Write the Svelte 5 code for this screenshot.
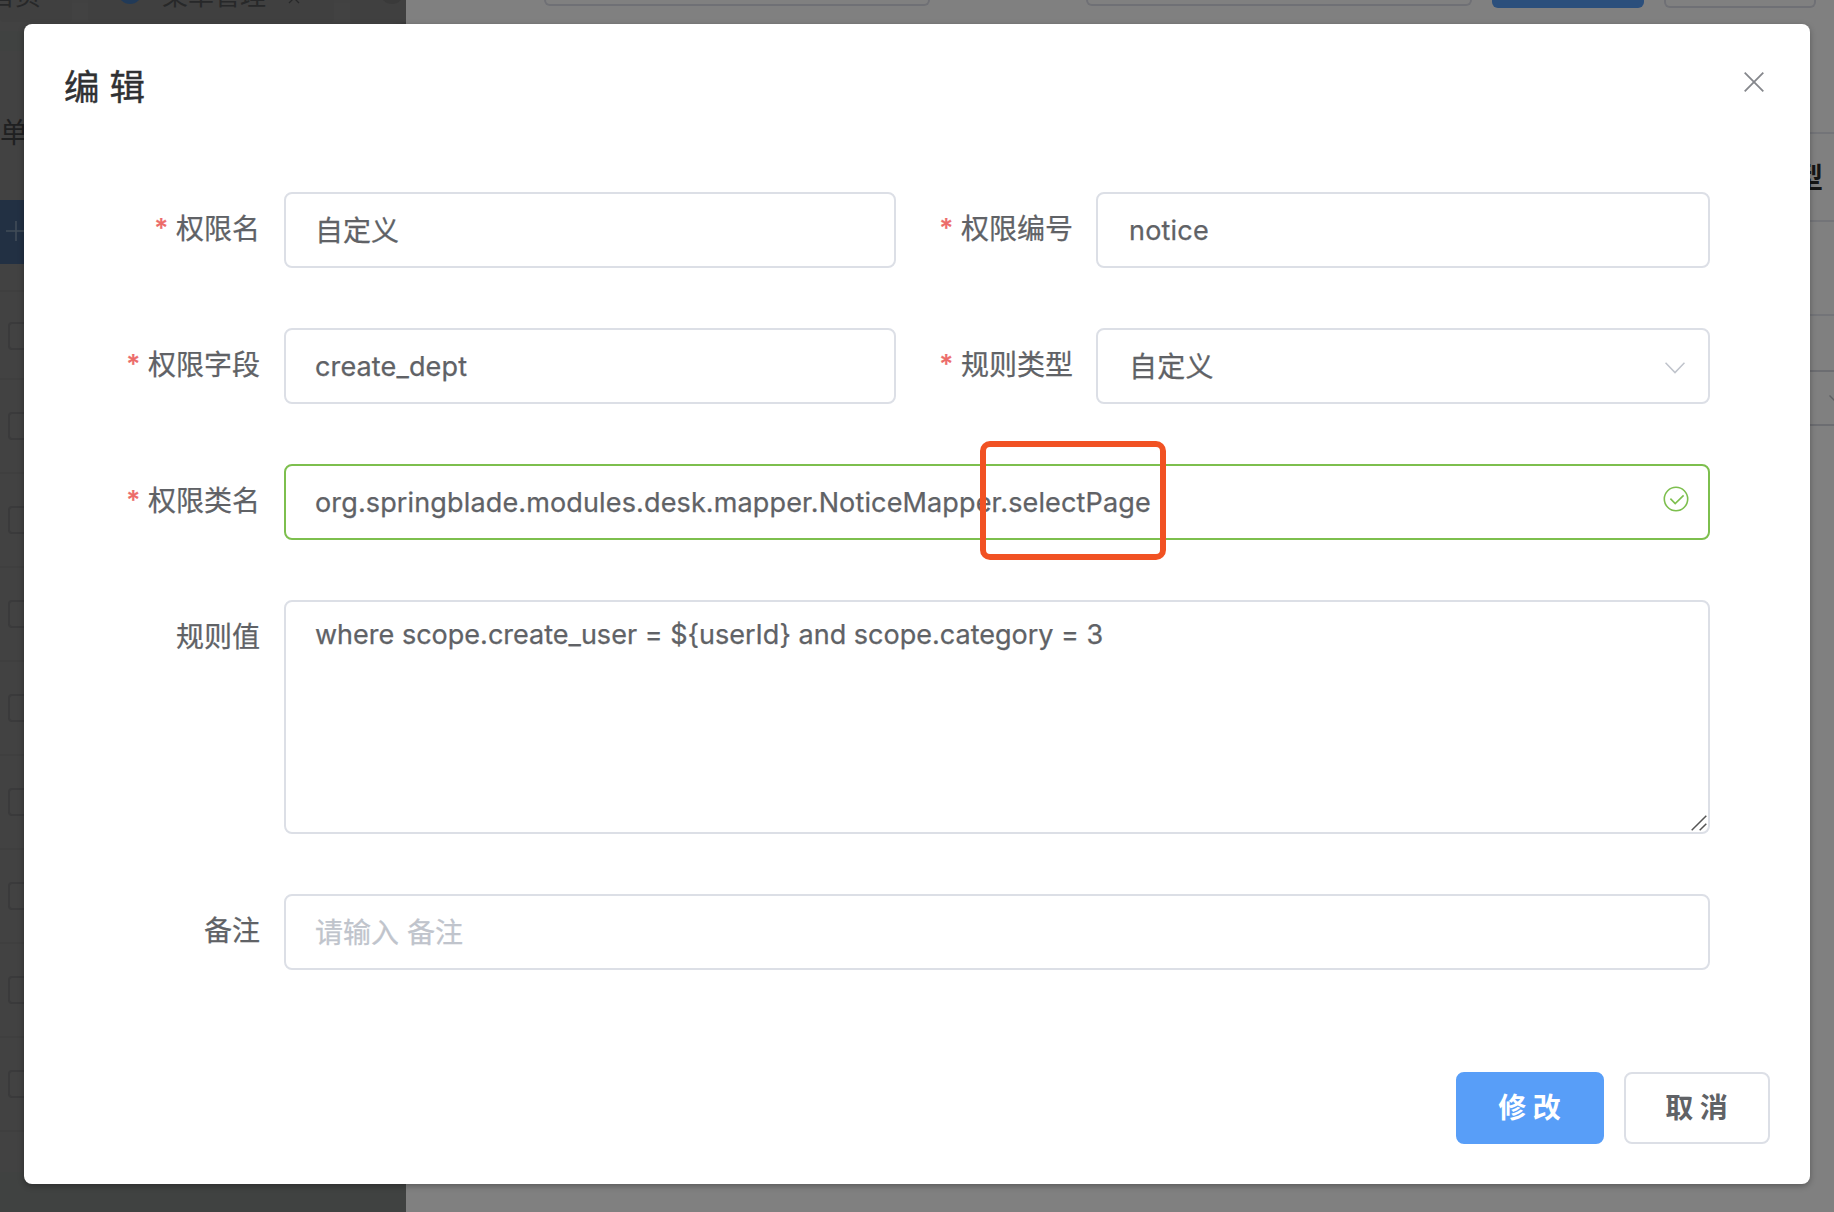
<script lang="ts">
  type Field = { label: string; value: string; required?: boolean; kind?: string; placeholder?: boolean };

  const rows: Field[][] = [
    [
      { label: '权限名', value: '自定义', required: true, kind: 'cjk' },
      { label: '权限编号', value: 'notice', required: true },
    ],
    [
      { label: '权限字段', value: 'create_dept', required: true },
      { label: '规则类型', value: '自定义', required: true, kind: 'select' },
    ],
    [{ label: '权限类名', value: 'org.springblade.modules.desk.mapper.NoticeMapper.selectPage', required: true, kind: 'valid' }],
    [{ label: '规则值', value: 'where scope.create_user = ${userId} and scope.category = 3', kind: 'area' }],
    [{ label: '备注', value: '请输入 备注', placeholder: true, kind: 'cjk' }],
  ];
  const tableRows = [1, 2, 3, 4, 5, 6, 7, 8];
</script>

<div class="screen">
  <section class="list">
    <nav class="tabs">
      <div class="tab first"><span>首页</span></div>
      <div class="tab second">
        <i class="dot"></i><span>菜单管理</span>
        <svg class="tabx" viewBox="0 0 12 12"><path d="M1 1l10 10M11 1L1 11" /></svg>
      </div>
      <div class="tab third"><i class="dot grey"></i></div>
    </nav>
    <div class="band"></div>
    <div class="search">单</div>
    <div class="add"><svg viewBox="0 0 20 20"><path d="M10 0v20M0 10h20" /></svg></div>
    <div class="trow head"><i class="check"></i></div>
    {#each tableRows as r (r)}
      <div class="trow"><i class="check"></i></div>
    {/each}
    <div class="foot"></div>
  </section>

  <section class="drawer">
    <div class="filters">
      <i class="box"></i><i class="box gap"></i><i class="btn"></i><i class="btn plain"></i>
    </div>
    <div class="dtable">
      <div class="dhead">型</div>
      <div class="drow"></div>
      <div class="drow short"></div>
      <div class="drow sel"><svg viewBox="0 0 20 11"><path d="M.5.5L10 10 19.5.5" /></svg></div>
    </div>
  </section>
</div>

<div class="dialog">
  <header>
    <h1>编 辑</h1>
    <svg class="close" viewBox="0 0 20 20"><path d="M.7.7l18.6 18.6M19.3.7L.7 19.3" /></svg>
  </header>

  <form>
    {#each rows as row, i (i)}
      <div class="row" class:double={row.length === 2}>
        {#each row as f (f.label)}
          <div class="item">
            <div class="label">{#if f.required}<b>*</b>{/if}<span>{f.label}</span></div>
            <div class="control {f.kind ?? ''}" class:hint={f.placeholder}>
              <span class="value">{f.value}</span>
              {#if f.kind === 'select'}
                <svg class="chev" viewBox="0 0 20 12"><path d="M.5.7L10 10.6 19.5.7" /></svg>
              {:else if f.kind === 'valid'}
                <svg class="ok" viewBox="0 0 26 26"><circle cx="13" cy="13" r="11.7" /><path d="M7.4 12.6l4.8 5 8.4-8.2" /></svg>
                <i class="mark"></i>
              {:else if f.kind === 'area'}
                <svg class="grip" viewBox="0 0 16 16"><path d="M.7 15.3L15.3.7M8.7 15.3l6.6-6.6" /></svg>
              {/if}
            </div>
          </div>
        {/each}
      </div>
    {/each}
  </form>

  <footer>
    <button class="primary" type="button">修 改</button>
    <button type="button">取 消</button>
  </footer>
</div>

<style>
  :global(body) {
    overflow: hidden;
  }
  .screen,
  .dialog {
    box-sizing: border-box;
    font-family: Inter, 'Noto Sans CJK SC', sans-serif;
  }
  .screen *,
  .dialog * {
    box-sizing: border-box;
  }
  svg {
    display: block;
    fill: none;
    flex: none;
  }
  .screen {
    display: flex;
    width: 1834px;
    height: 1212px;
    overflow: hidden;
    background: #808080;
  }

  /* dimmed list page */
  .list {
    width: 406px;
    height: 1212px;
    display: flex;
    flex-direction: column;
    background: #424242;
    overflow: hidden;
    box-shadow: inset -10px 0 10px -8px #373737;
  }
  .tabs {
    display: flex;
    gap: 16px;
    height: 31px;
    flex: none;
    color: #272829;
    font-size: 26px;
  }
  .tab {
    height: 22px;
    display: flex;
    flex: none;
    border-radius: 0 0 4px 4px;
    background: #404040;
  }
  .tab span {
    margin-top: -24px;
    line-height: 40px;
    height: 40px;
    white-space: nowrap;
  }
  .first {
    width: 72px;
    padding-right: 31px;
    justify-content: flex-end;
  }
  .second {
    width: 246px;
    padding-left: 30px;
  }
  .second span {
    margin-left: 20px;
  }
  .third {
    width: 120px;
    padding-left: 30px;
  }
  .dot {
    width: 24px;
    height: 24px;
    border-radius: 50%;
    background: #213a58;
    margin-top: -20px;
    flex: none;
  }
  .dot.grey {
    background: #3a3a3a;
  }
  .tabx {
    width: 12px;
    height: 12px;
    margin: -8px 0 0 22px;
    stroke: #272829;
    stroke-width: 1.3;
  }
  .band {
    height: 20px;
    background: #404241;
    flex: none;
  }
  .search {
    height: 149px;
    flex: none;
    padding-top: 62px;
    font-size: 28px;
    line-height: 40px;
    color: #1f2021;
  }
  .add {
    height: 64px;
    flex: none;
    background: #223043;
    padding: 21px 0 0 6px;
  }
  .add svg {
    width: 20px;
    height: 20px;
    stroke: #424c58;
    stroke-width: 1.6;
  }
  .trow {
    height: 94px;
    flex: none;
    padding: 32px 0 0 8px;
    border-bottom: 2px solid #3f3f3f;
  }
  .trow.head {
    height: 90px;
    margin-top: 26px;
    border-top: 2px solid #3f3f3f;
    padding-top: 30px;
  }
  .check {
    display: block;
    width: 28px;
    height: 28px;
    border: 2px solid #3a3a3b;
    border-radius: 4px;
  }
  .foot {
    margin-top: 40px;
    flex: 1;
    background: #404241;
  }

  /* dimmed drawer */
  .drawer {
    flex: 1;
    background: #808080;
    overflow: hidden;
  }
  .filters {
    display: flex;
    height: 132px;
    padding-left: 138px;
  }
  .filters i {
    flex: none;
    height: 6px;
    width: 386px;
    border: 2px solid #6f7075;
    border-top: 0;
    border-radius: 0 0 8px 8px;
  }
  .filters .gap {
    margin-left: 156px;
  }
  .filters .btn {
    width: 152px;
    height: 8px;
    margin-left: 20px;
    border: 0;
    border-radius: 0 0 6px 6px;
    background: #2b4f7c;
  }
  .filters .plain {
    background: none;
    border: 2px solid #6f7075;
    border-top: 0;
  }
  .dtable {
    border-top: 2px solid #737478;
  }
  .dhead {
    height: 88px;
    padding: 24px 11px 0 0;
    border-bottom: 2px solid #737478;
    font-size: 28px;
    line-height: 40px;
    font-weight: 700;
    text-align: right;
    color: #151515;
  }
  .drow {
    height: 94px;
    border-bottom: 2px solid #737478;
  }
  .drow.short {
    height: 56px;
    border-color: #6c6d71;
  }
  .drow.sel {
    height: 54px;
    padding: 23px 0 0 1423px;
    border-color: #6c6d71;
  }
  .sel svg {
    width: 20px;
    height: 11px;
    stroke: #606164;
    stroke-width: 1.4;
  }

  /* dialog */
  .dialog {
    position: absolute;
    left: 24px;
    top: 24px;
    width: 1786px;
    height: 1160px;
    padding: 0 40px 40px;
    display: flex;
    flex-direction: column;
    border-radius: 8px;
    background: #fff;
    box-shadow: 0 2px 6px rgba(0, 0, 0, 0.3);
    color: #606266;
    font-size: 28px;
  }
  header {
    height: 168px;
    flex: none;
    display: flex;
    justify-content: space-between;
    padding: 40px 6px 0 0;
  }
  h1 {
    margin: 0;
    font-size: 35.5px;
    line-height: 48px;
    font-weight: 400;
    color: #303133;
    -webkit-text-stroke: 0.4px #303133;
  }
  .close {
    width: 20px;
    height: 20px;
    margin-top: 8px;
    stroke: #85878c;
    stroke-width: 1.8;
  }
  form {
    flex: 1;
    display: flex;
    flex-direction: column;
    gap: 60px;
    padding: 0 60px 0 40px;
  }
  .row {
    display: grid;
    grid-template-columns: 1fr;
  }
  .double {
    grid-template-columns: 792px 1fr;
  }
  .item {
    display: grid;
    grid-template-columns: 180px 1fr;
  }
  .double .item + .item {
    grid-template-columns: 200px 1fr;
  }
  .item + .item .label {
    padding-right: 23px;
  }
  .label {
    display: flex;
    justify-content: flex-end;
    padding-right: 24px;
    line-height: 74px;
    height: 76px;
    white-space: nowrap;
    -webkit-text-stroke: 0.25px;
  }
  .label b {
    font-weight: 500;
    color: #ec6b68;
    margin-right: 8px;
    font-size: 26px;
    line-height: 71px;
  }
  .control {
    display: flex;
    justify-content: space-between;
    height: 76px;
    padding: 0 22px 0 29px;
    border: 2px solid #dcdfe6;
    border-radius: 8px;
    line-height: 73px;
    white-space: nowrap;
  }
  .value {
    font-size: 27px;
    letter-spacing: 0.14px;
    -webkit-text-stroke: 0.25px;
  }
  .item + .item .value {
    margin-left: 2px;
    letter-spacing: 0.2px;
  }
  .cjk .value,
  .select .value {
    font-size: 28px;
    letter-spacing: 0;
  }
  .cjk {
    line-height: 74px;
  }
  .select {
    padding-right: 23px;
    line-height: 74px;
  }
  .hint {
    color: #c0c4cc;
  }
  .chev {
    width: 20px;
    height: 12px;
    margin-top: 32px;
    stroke: #c0c4cc;
    stroke-width: 1.6;
  }
  .valid {
    position: relative;
    border-color: #7dbf4e;
    padding-right: 19px;
  }
  .ok {
    width: 26px;
    height: 26px;
    margin-top: 20px;
    margin-bottom: 0;
    stroke: #7dbf4e;
    stroke-width: 1.6;
  }
  /* highlight frame drawn over the method name */
  .mark {
    position: absolute;
    left: 694px;
    top: -25px;
    width: 186px;
    height: 119px;
    border: 6px solid #f15223;
    border-radius: 10px;
  }
  .area {
    height: 234px;
    line-height: 65px;
    padding-right: 1px;
  }
  .area .value {
    letter-spacing: 0.01px;
  }
  .grip {
    width: 16px;
    height: 16px;
    align-self: flex-end;
    margin-bottom: 1px;
    stroke: #555;
    stroke-width: 1.5;
  }
  footer {
    display: flex;
    justify-content: flex-end;
    gap: 20px;
  }
  button {
    width: 146px;
    height: 72px;
    padding: 0 1px 0 0;
    border: 2px solid #dcdfe6;
    border-radius: 8px;
    background: #fff;
    color: #606266;
    font: 700 28px/40px Inter, 'Noto Sans CJK SC', sans-serif;
  }
  .primary {
    width: 148px;
    border-color: #589ef8;
    background: #589ef8;
    color: #fff;
  }
</style>
